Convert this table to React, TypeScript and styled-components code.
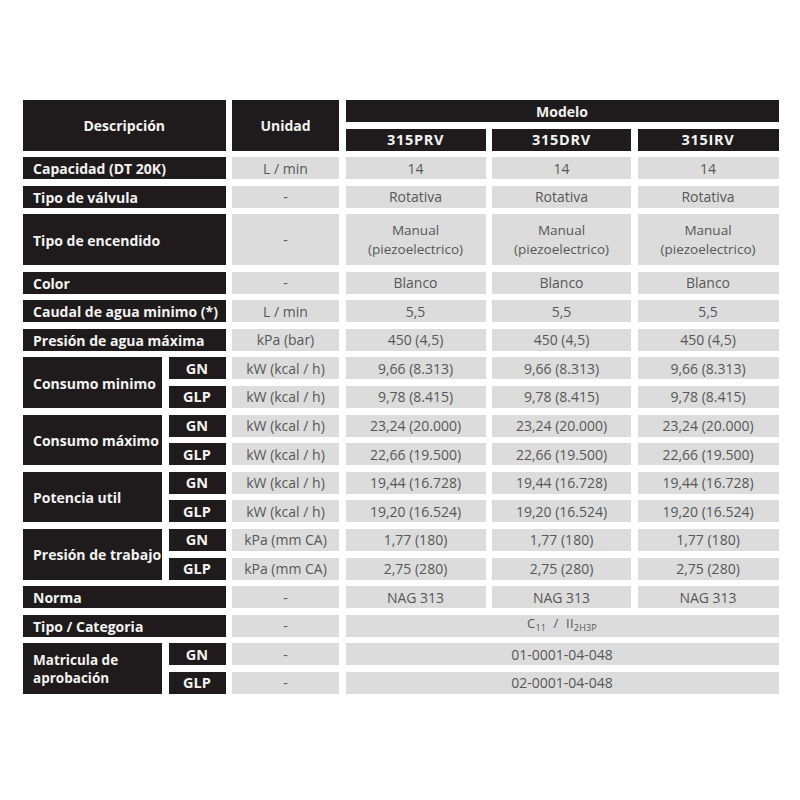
import React from "react";
import styled, { createGlobalStyle } from "styled-components";

const DARK = "#1f1b1c";
const LIGHT = "#dcdcdc";
const ROW_H = 22;

const GlobalStyle = createGlobalStyle`
  html, body {
    margin: 0;
    padding: 0;
    background: #ffffff;
  }
  body {
    font-family: "Open Sans", "DejaVu Sans", sans-serif;
  }
`;

const Page = styled.div`
  width: 800px;
  height: 800px;
  padding: 100px 0 0 23px;
  box-sizing: border-box;
`;

const Sheet = styled.div`
  display: grid;
  grid-template-columns: 139px 57px 107px 140px 139px 141px;
  grid-auto-rows: ${ROW_H}px;
  column-gap: 6.5px;
  row-gap: 6.6px;
`;

interface CellProps {
  $cols?: number;
  $rows?: number;
}

const Cell = styled.div<CellProps>`
  grid-column: span ${(p) => p.$cols || 1};
  grid-row: span ${(p) => p.$rows || 1};
  display: flex;
  align-items: center;
  box-sizing: border-box;
  font-size: 14px;
  line-height: 17px;
  white-space: nowrap;
`;

const HeadCell = styled(Cell)`
  background: ${DARK};
  color: #f2f2f2;
  font-weight: 700;
  justify-content: center;
  font-size: 14px;
`;

const ModelCell = styled(HeadCell)`
  letter-spacing: 0.7px;
  font-size: 14.5px;
`;

const LabelCell = styled(Cell)`
  background: ${DARK};
  color: #f2f2f2;
  font-weight: 700;
  padding-left: 10px;
  padding-top: 1px;
`;

const TagCell = styled(HeadCell)`
  font-size: 14.5px;
`;

const ValueCell = styled(Cell)`
  background: ${LIGHT};
  color: #575757;
  justify-content: center;
  text-align: center;
`;

// two stacked lines inside one tall cell
const TwoLines = styled.span`
  font-size: 13.5px;
  line-height: 18.5px;
  white-space: normal;
`;

const Sub = styled.sub`
  font-size: 9px;
  vertical-align: -3px;
  letter-spacing: 0.2px;
`;

const Category = styled.span`
  font-size: 13px;
  letter-spacing: 0.3px;
`;

type Plain = {
  kind: "plain";
  label: React.ReactNode;
  unit: string;
  values: React.ReactNode[];
  tall?: boolean;
};

type Group = {
  kind: "group";
  label: React.ReactNode;
  lines: { tag: string; unit: string; values: React.ReactNode[] }[];
};

type Row = Plain | Group;

const UNIT_KW = "kW (kcal / h)";
const UNIT_KPA = "kPa (mm CA)";

const rows: Row[] = [
  { kind: "plain", label: "Capacidad (DT 20K)", unit: "L / min", values: ["14", "14", "14"] },
  { kind: "plain", label: "Tipo de válvula", unit: "-", values: ["Rotativa", "Rotativa", "Rotativa"] },
  {
    kind: "plain",
    label: "Tipo de encendido",
    unit: "-",
    tall: true,
    values: [0, 1, 2].map((i) => (
      <TwoLines key={i}>
        Manual
        <br />
        (piezoelectrico)
      </TwoLines>
    )),
  },
  { kind: "plain", label: "Color", unit: "-", values: ["Blanco", "Blanco", "Blanco"] },
  { kind: "plain", label: "Caudal de agua minimo (*)", unit: "L / min", values: ["5,5", "5,5", "5,5"] },
  { kind: "plain", label: "Presión de agua máxima", unit: "kPa (bar)", values: ["450 (4,5)", "450 (4,5)", "450 (4,5)"] },
  {
    kind: "group",
    label: "Consumo minimo",
    lines: [
      { tag: "GN", unit: UNIT_KW, values: ["9,66 (8.313)", "9,66 (8.313)", "9,66 (8.313)"] },
      { tag: "GLP", unit: UNIT_KW, values: ["9,78 (8.415)", "9,78 (8.415)", "9,78 (8.415)"] },
    ],
  },
  {
    kind: "group",
    label: "Consumo máximo",
    lines: [
      { tag: "GN", unit: UNIT_KW, values: ["23,24 (20.000)", "23,24 (20.000)", "23,24 (20.000)"] },
      { tag: "GLP", unit: UNIT_KW, values: ["22,66 (19.500)", "22,66 (19.500)", "22,66 (19.500)"] },
    ],
  },
  {
    kind: "group",
    label: "Potencia util",
    lines: [
      { tag: "GN", unit: UNIT_KW, values: ["19,44 (16.728)", "19,44 (16.728)", "19,44 (16.728)"] },
      { tag: "GLP", unit: UNIT_KW, values: ["19,20 (16.524)", "19,20 (16.524)", "19,20 (16.524)"] },
    ],
  },
  {
    kind: "group",
    label: "Presión de trabajo",
    lines: [
      { tag: "GN", unit: UNIT_KPA, values: ["1,77 (180)", "1,77 (180)", "1,77 (180)"] },
      { tag: "GLP", unit: UNIT_KPA, values: ["2,75 (280)", "2,75 (280)", "2,75 (280)"] },
    ],
  },
  { kind: "plain", label: "Norma", unit: "-", values: ["NAG 313", "NAG 313", "NAG 313"] },
  {
    kind: "plain",
    label: "Tipo / Categoria",
    unit: "-",
    values: [
      <Category key="cat">
        C<Sub>11</Sub>&nbsp;&nbsp;/&nbsp;&nbsp;II<Sub>2H3P</Sub>
      </Category>,
    ],
  },
  {
    kind: "group",
    label: (
      <TwoLines>
        Matricula de
        <br />
        aprobación
      </TwoLines>
    ),
    lines: [
      { tag: "GN", unit: "-", values: ["01-0001-04-048"] },
      { tag: "GLP", unit: "-", values: ["02-0001-04-048"] },
    ],
  },
];

const Values: React.FC<{ values: React.ReactNode[]; rows?: number }> = ({ values, rows }) => (
  <>
    {values.map((v, i) => (
      <ValueCell key={i} $rows={rows} $cols={values.length === 1 ? 3 : 1}>
        {v}
      </ValueCell>
    ))}
  </>
);

const App: React.FC = () => {
  return (
    <Page>
      <GlobalStyle />
      <Sheet>
        <HeadCell $cols={2} $rows={2}>Descripción</HeadCell>
        <HeadCell $rows={2}>Unidad</HeadCell>
        <HeadCell $cols={3}>Modelo</HeadCell>
        <ModelCell>315PRV</ModelCell>
        <ModelCell>315DRV</ModelCell>
        <ModelCell>315IRV</ModelCell>

        {rows.map((row, i) =>
          row.kind === "plain" ? (
            <React.Fragment key={i}>
              <LabelCell $cols={2} $rows={row.tall ? 2 : 1}>{row.label}</LabelCell>
              <ValueCell $rows={row.tall ? 2 : 1}>{row.unit}</ValueCell>
              <Values values={row.values} rows={row.tall ? 2 : 1} />
            </React.Fragment>
          ) : (
            <React.Fragment key={i}>
              <LabelCell $rows={2}>{row.label}</LabelCell>
              {row.lines.map((line) => (
                <React.Fragment key={line.tag}>
                  <TagCell>{line.tag}</TagCell>
                  <ValueCell>{line.unit}</ValueCell>
                  <Values values={line.values} />
                </React.Fragment>
              ))}
            </React.Fragment>
          )
        )}
      </Sheet>
    </Page>
  );
};

export default App;
